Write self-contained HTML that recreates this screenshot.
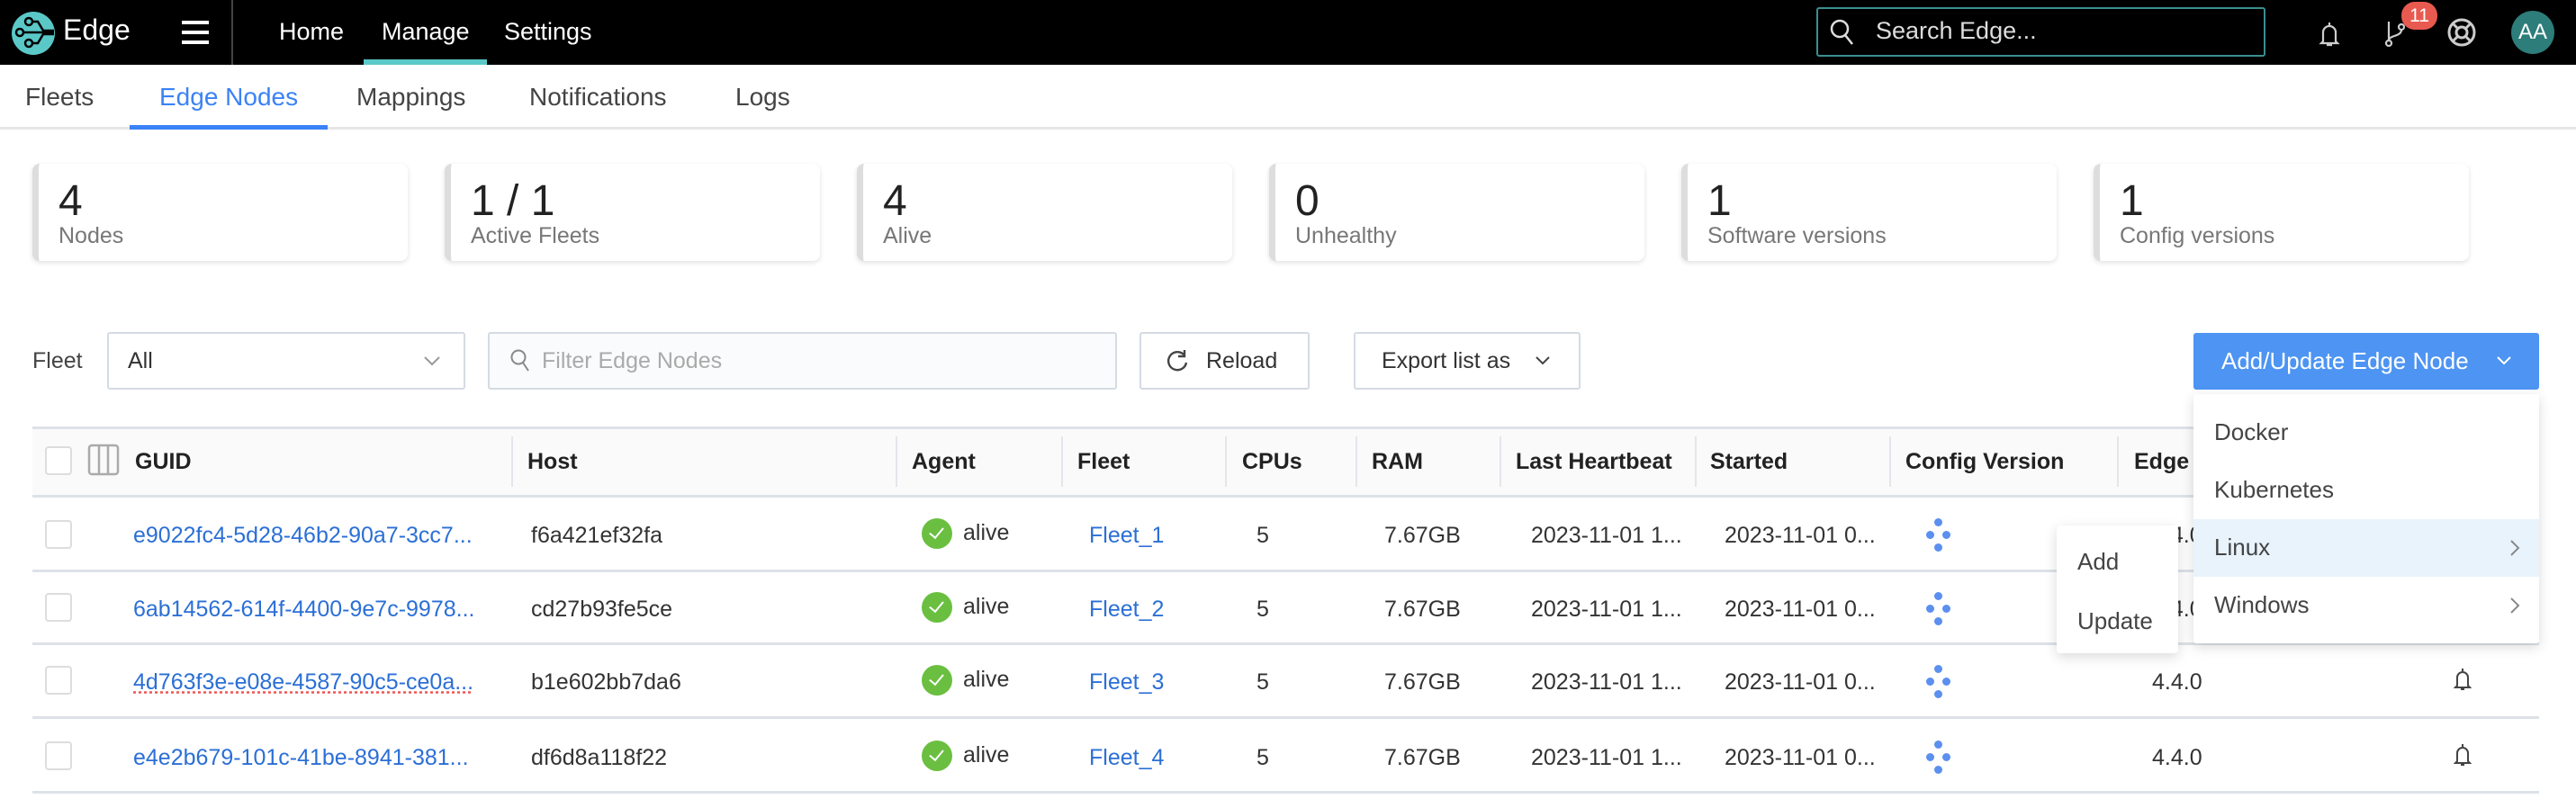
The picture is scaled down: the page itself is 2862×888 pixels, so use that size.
<!DOCTYPE html>
<html><head><meta charset="utf-8"><style>
*{box-sizing:border-box;margin:0;padding:0}
body{width:2862px;height:888px;position:relative;background:#fff;font-family:"Liberation Sans",sans-serif;color:#333;overflow:hidden}
.a{position:absolute;white-space:nowrap}
.top{position:absolute;left:0;top:0;width:2862px;height:72px;background:#000}
.nav{color:#fff;font-size:27px;top:20px}
.tab{font-size:28px;top:92px;color:#444}
.card{position:absolute;top:182px;width:417px;height:108px;background:#fff;border-radius:8px;box-shadow:0 2px 6px rgba(0,0,0,.12);border-left:7px solid #ddd}
.card .n{position:absolute;left:22px;top:14px;font-size:48px;color:#222}
.card .l{position:absolute;left:22px;top:66px;font-size:25px;color:#777}
.box{position:absolute;border:2px solid #d5dbe3;border-radius:3px;background:#fff}
.th{top:499px;font-size:25px;font-weight:bold;color:#222}
.dv{position:absolute;top:485px;width:2px;height:56px;background:#e3e6ea}
.rl{position:absolute;left:36px;width:2785px;height:3px;background:#dde2e8}
.cb{position:absolute;left:50px;width:30px;height:32px;border:2px solid #ddd;border-radius:4px;background:#fff}
.td{font-size:25px;color:#333}
.lk{color:#2b6fd6}
.ok{position:absolute;width:34px;height:34px;border-radius:50%;background:#6abf40}
.ok:after{content:"";position:absolute;left:12px;top:7px;width:7px;height:13px;border:solid #fff;border-width:0 2px 2px 0;transform:rotate(40deg)}
.dot{position:absolute;width:9px;height:9px;border-radius:50%;background:#5b8ff0}
.mi{font-size:26px;color:#444}
</style></head><body>
<div class="top"></div>
<svg class="a" style="left:12px;top:12px" width="50" height="50" viewBox="0 0 50 50"><circle cx="25" cy="25" r="24" fill="#5bc8c8"/><g stroke="#000" stroke-width="2.5" fill="none"><circle cx="20" cy="12" r="4"/><circle cx="10" cy="24" r="4"/><circle cx="20" cy="36" r="4"/><path d="M24 12h6l6 10h12M14 24h34M24 36h6l6-10h12"/></g></svg>
<div class="a" style="left:70px;top:15px;color:#fff;font-size:32px">Edge</div>
<div class="a" style="left:202px;top:23px;width:30px;height:4px;background:#fff"></div>
<div class="a" style="left:202px;top:34px;width:30px;height:4px;background:#fff"></div>
<div class="a" style="left:202px;top:45px;width:30px;height:4px;background:#fff"></div>
<div class="a" style="left:257px;top:0;width:2px;height:72px;background:#444"></div>
<div class="a nav" style="left:310px">Home</div>
<div class="a nav" style="left:424px">Manage</div>
<div class="a nav" style="left:560px">Settings</div>
<div class="a" style="left:404px;top:66px;width:137px;height:6px;background:#5bc8c8"></div>
<div class="a" style="left:2018px;top:8px;width:499px;height:55px;border:2px solid #3a8f8f;border-radius:3px"></div>
<svg class="a" style="left:2032px;top:20px" width="30" height="32" viewBox="0 0 30 32"><circle cx="12" cy="12" r="9" stroke="#ddd" stroke-width="2.5" fill="none"/><path d="M18 19l8 10" stroke="#ddd" stroke-width="2.5"/></svg>
<div class="a" style="left:2084px;top:19px;color:#ddd;font-size:27px">Search Edge...</div>
<svg class="a" style="left:2575px;top:22px" width="26" height="32" viewBox="0 0 26 32"><path d="M13 3v3M6 24V14a7 7 0 0 1 14 0v10l2 2H4z M10 28h6" stroke="#ccc" stroke-width="2.2" fill="none"/></svg>
<svg class="a" style="left:2648px;top:20px" width="28" height="34" viewBox="0 0 28 34"><g stroke="#ccc" stroke-width="2.2" fill="none"><circle cx="6" cy="28" r="3"/><circle cx="20" cy="10" r="3"/><path d="M6 4v21M20 13c0 8-14 6-14 12"/></g></svg>
<div class="a" style="left:2668px;top:2px;width:40px;height:31px;border-radius:15px;background:#e85a50;color:#fff;font-size:21px;text-align:center;line-height:31px">11</div>
<svg class="a" style="left:2718px;top:19px" width="34" height="34" viewBox="0 0 34 34"><g stroke="#ccc" stroke-width="3" fill="none"><circle cx="17" cy="17" r="14"/><circle cx="17" cy="17" r="6"/><path d="M7 7l6 6M27 7l-6 6M7 27l6-6M27 27l-6-6"/></g></svg>
<div class="a" style="left:2790px;top:12px;width:48px;height:48px;border-radius:50%;background:#2d7d7a;color:#fff;font-size:24px;text-align:center;line-height:48px">AA</div>

<div class="a tab" style="left:28px">Fleets</div>
<div class="a tab" style="left:177px;color:#3b82f6">Edge Nodes</div>
<div class="a tab" style="left:396px">Mappings</div>
<div class="a tab" style="left:588px">Notifications</div>
<div class="a tab" style="left:817px">Logs</div>
<div class="a" style="left:0;top:141px;width:2862px;height:3px;background:#e6e6e6"></div>
<div class="a" style="left:144px;top:139px;width:220px;height:5px;background:#3b82f6"></div>

<div class="card" style="left:36px"><div class="n">4</div><div class="l">Nodes</div></div>
<div class="card" style="left:494px"><div class="n">1 / 1</div><div class="l">Active Fleets</div></div>
<div class="card" style="left:952px"><div class="n">4</div><div class="l">Alive</div></div>
<div class="card" style="left:1410px"><div class="n">0</div><div class="l">Unhealthy</div></div>
<div class="card" style="left:1868px"><div class="n">1</div><div class="l">Software versions</div></div>
<div class="card" style="left:2326px"><div class="n">1</div><div class="l">Config versions</div></div>

<div class="a" style="left:36px;top:387px;font-size:25px;color:#444">Fleet</div>
<div class="box" style="left:119px;top:369px;width:398px;height:64px"></div>
<div class="a" style="left:142px;top:387px;font-size:25px;color:#333">All</div>
<svg class="a" style="left:470px;top:394px" width="20" height="14" viewBox="0 0 20 14"><path d="M2 3l8 8 8-8" stroke="#999" stroke-width="2" fill="none"/></svg>
<div class="box" style="left:542px;top:369px;width:699px;height:64px;background:#fafbfc"></div>
<svg class="a" style="left:566px;top:387px" width="24" height="28" viewBox="0 0 24 28"><circle cx="10" cy="10" r="7.5" stroke="#888" stroke-width="2" fill="none"/><path d="M15 16l6 9" stroke="#888" stroke-width="2"/></svg>
<div class="a" style="left:602px;top:387px;font-size:25px;color:#aaa">Filter Edge Nodes</div>
<div class="box" style="left:1266px;top:369px;width:189px;height:64px"></div>
<svg class="a" style="left:1294px;top:387px" width="28" height="28" viewBox="0 0 28 28"><path d="M22 8A10 10 0 1 0 24 16" stroke="#444" stroke-width="2.4" fill="none"/><path d="M22 2v7h-7" stroke="#444" stroke-width="2.4" fill="none"/></svg>
<div class="a" style="left:1340px;top:387px;font-size:25px;color:#333">Reload</div>
<div class="box" style="left:1504px;top:369px;width:252px;height:64px"></div>
<div class="a" style="left:1535px;top:387px;font-size:25px;color:#333">Export list as</div>
<svg class="a" style="left:1704px;top:394px" width="20" height="14" viewBox="0 0 20 14"><path d="M3 3l7 7 7-7" stroke="#444" stroke-width="2" fill="none"/></svg>
<div class="a" style="left:2437px;top:370px;width:384px;height:63px;background:#4d94f3;border-radius:3px"></div>
<div class="a" style="left:2468px;top:386px;font-size:26px;color:#fff">Add/Update Edge Node</div>
<svg class="a" style="left:2772px;top:394px" width="20" height="14" viewBox="0 0 20 14"><path d="M3 3l7 7 7-7" stroke="#fff" stroke-width="2" fill="none"/></svg>

<div class="a" style="left:36px;top:474px;width:2785px;height:77px;background:#fafafa;border-top:3px solid #dde2e8"></div>
<div class="rl" style="top:550px"></div>
<div class="cb" style="top:496px"></div>
<svg class="a" style="left:97px;top:493px" width="36" height="36" viewBox="0 0 36 36"><g stroke="#aaa" stroke-width="2.5" fill="none"><rect x="2" y="2" width="32" height="32" rx="3"/><path d="M13 2v32M23 2v32"/></g></svg>
<div class="a th" style="left:150px">GUID</div>
<div class="dv" style="left:568px"></div><div class="a th" style="left:586px">Host</div>
<div class="dv" style="left:995px"></div><div class="a th" style="left:1013px">Agent</div>
<div class="dv" style="left:1179px"></div><div class="a th" style="left:1197px">Fleet</div>
<div class="dv" style="left:1361px"></div><div class="a th" style="left:1380px">CPUs</div>
<div class="dv" style="left:1506px"></div><div class="a th" style="left:1524px">RAM</div>
<div class="dv" style="left:1666px"></div><div class="a th" style="left:1684px">Last Heartbeat</div>
<div class="dv" style="left:1883px"></div><div class="a th" style="left:1900px">Started</div>
<div class="dv" style="left:2099px"></div><div class="a th" style="left:2117px">Config Version</div>
<div class="dv" style="left:2352px"></div><div class="a th" style="left:2371px">Edge</div>

<div class="rl" style="top:633px"></div><div class="rl" style="top:714px"></div><div class="rl" style="top:796px"></div><div class="rl" style="top:879px"></div>

<div class="cb" style="top:578px"></div>
<div class="a td lk" style="left:148px;top:581px">e9022fc4-5d28-46b2-90a7-3cc7...</div>
<div class="a td" style="left:590px;top:581px">f6a421ef32fa</div>
<div class="ok" style="left:1024px;top:576px"></div><div class="a td" style="left:1070px;top:578px">alive</div>
<div class="a td lk" style="left:1210px;top:581px">Fleet_1</div>
<div class="a td" style="left:1396px;top:581px">5</div>
<div class="a td" style="left:1538px;top:581px">7.67GB</div>
<div class="a td" style="left:1701px;top:581px">2023-11-01 1...</div>
<div class="a td" style="left:1916px;top:581px">2023-11-01 0...</div>
<div class="dot" style="left:2149px;top:576px"></div><div class="dot" style="left:2140px;top:590px"></div><div class="dot" style="left:2158px;top:590px"></div><div class="dot" style="left:2149px;top:604px"></div>

<div class="cb" style="top:659px"></div>
<div class="a td lk" style="left:148px;top:663px">6ab14562-614f-4400-9e7c-9978...</div>
<div class="a td" style="left:590px;top:663px">cd27b93fe5ce</div>
<div class="ok" style="left:1024px;top:658px"></div><div class="a td" style="left:1070px;top:660px">alive</div>
<div class="a td lk" style="left:1210px;top:663px">Fleet_2</div>
<div class="a td" style="left:1396px;top:663px">5</div>
<div class="a td" style="left:1538px;top:663px">7.67GB</div>
<div class="a td" style="left:1701px;top:663px">2023-11-01 1...</div>
<div class="a td" style="left:1916px;top:663px">2023-11-01 0...</div>
<div class="dot" style="left:2149px;top:658px"></div><div class="dot" style="left:2140px;top:672px"></div><div class="dot" style="left:2158px;top:672px"></div><div class="dot" style="left:2149px;top:686px"></div>

<div class="cb" style="top:740px"></div>
<div class="a td lk" style="left:148px;top:744px;text-decoration:underline dotted #e55">4d763f3e-e08e-4587-90c5-ce0a...</div>
<div class="a td" style="left:590px;top:744px">b1e602bb7da6</div>
<div class="ok" style="left:1024px;top:739px"></div><div class="a td" style="left:1070px;top:741px">alive</div>
<div class="a td lk" style="left:1210px;top:744px">Fleet_3</div>
<div class="a td" style="left:1396px;top:744px">5</div>
<div class="a td" style="left:1538px;top:744px">7.67GB</div>
<div class="a td" style="left:1701px;top:744px">2023-11-01 1...</div>
<div class="a td" style="left:1916px;top:744px">2023-11-01 0...</div>
<div class="dot" style="left:2149px;top:739px"></div><div class="dot" style="left:2140px;top:753px"></div><div class="dot" style="left:2158px;top:753px"></div><div class="dot" style="left:2149px;top:767px"></div>
<div class="a td" style="left:2391px;top:744px">4.4.0</div>
<svg class="a" style="left:2726px;top:741px" width="20" height="28" viewBox="0 0 20 28"><path d="M10 2v3M4 21V12a6 6 0 0 1 12 0v9l2 2H2z M8 25h4" stroke="#444" stroke-width="2" fill="none"/></svg>

<div class="cb" style="top:824px"></div>
<div class="a td lk" style="left:148px;top:828px">e4e2b679-101c-41be-8941-381...</div>
<div class="a td" style="left:590px;top:828px">df6d8a118f22</div>
<div class="ok" style="left:1024px;top:823px"></div><div class="a td" style="left:1070px;top:825px">alive</div>
<div class="a td lk" style="left:1210px;top:828px">Fleet_4</div>
<div class="a td" style="left:1396px;top:828px">5</div>
<div class="a td" style="left:1538px;top:828px">7.67GB</div>
<div class="a td" style="left:1701px;top:828px">2023-11-01 1...</div>
<div class="a td" style="left:1916px;top:828px">2023-11-01 0...</div>
<div class="dot" style="left:2149px;top:823px"></div><div class="dot" style="left:2140px;top:837px"></div><div class="dot" style="left:2158px;top:837px"></div><div class="dot" style="left:2149px;top:851px"></div>
<div class="a td" style="left:2391px;top:828px">4.4.0</div>
<svg class="a" style="left:2726px;top:825px" width="20" height="28" viewBox="0 0 20 28"><path d="M10 2v3M4 21V12a6 6 0 0 1 12 0v9l2 2H2z M8 25h4" stroke="#444" stroke-width="2" fill="none"/></svg>

<div class="a td" style="left:2391px;top:581px">4.4.0</div>
<div class="a td" style="left:2391px;top:663px">4.4.0</div>

<div class="a" style="left:2437px;top:438px;width:384px;height:277px;background:#fff;border-radius:3px;box-shadow:0 4px 14px rgba(0,0,0,.15)"></div>
<div class="a" style="left:2437px;top:577px;width:384px;height:64px;background:#e8f3fc"></div>
<div class="a mi" style="left:2460px;top:465px">Docker</div>
<div class="a mi" style="left:2460px;top:529px">Kubernetes</div>
<div class="a mi" style="left:2460px;top:593px">Linux</div>
<div class="a mi" style="left:2460px;top:657px">Windows</div>
<svg class="a" style="left:2788px;top:599px" width="12" height="20" viewBox="0 0 12 20"><path d="M2 2l8 8-8 8" stroke="#888" stroke-width="2" fill="none"/></svg>
<svg class="a" style="left:2788px;top:663px" width="12" height="20" viewBox="0 0 12 20"><path d="M2 2l8 8-8 8" stroke="#888" stroke-width="2" fill="none"/></svg>
<div class="a" style="left:2285px;top:584px;width:135px;height:142px;background:#fff;border-radius:4px;box-shadow:0 4px 14px rgba(0,0,0,.15)"></div>
<div class="a mi" style="left:2308px;top:609px">Add</div>
<div class="a mi" style="left:2308px;top:675px">Update</div>
</body></html>
